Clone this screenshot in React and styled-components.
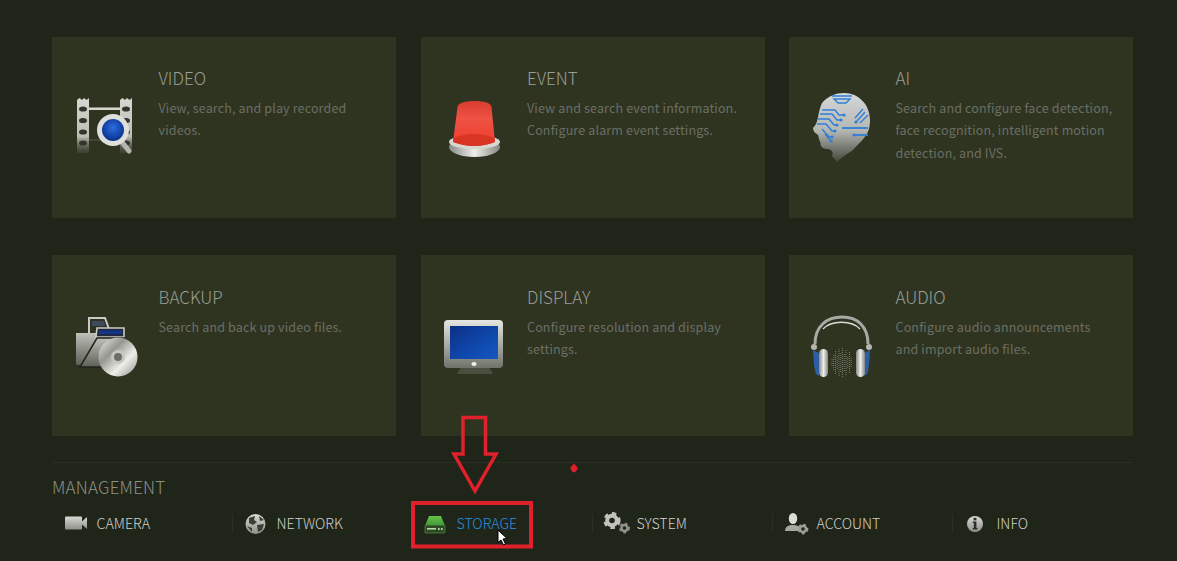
import React from "react";
import styled, { createGlobalStyle } from "styled-components";

const GlobalStyle = createGlobalStyle`
  html, body {
    margin: 0;
    padding: 0;
    background: #20251a;
    overflow: hidden;
  }
`;

const Page = styled.div`
  position: relative;
  width: 1177px;
  height: 561px;
  box-sizing: border-box;
  padding: 37px 44px 0 52px;
  background: #20251a;
  font-family: "Noto Sans CJK SC", "Noto Sans", sans-serif;
  overflow: hidden;
`;

const CardGrid = styled.div`
  display: grid;
  grid-template-columns: repeat(3, 344px);
  grid-auto-rows: 181px;
  column-gap: 24.5px;
  row-gap: 37px;
`;

const Card = styled.div`
  display: flex;
  background: #2f3421;
  padding-left: 16px;
`;

const IconSlot = styled.div`
  flex: none;
  width: 72px;
  height: 72px;
  margin-top: 55px;
  margin-right: 18px;
`;

const CardText = styled.div`
  padding-top: ${(p) => (p.$lower ? "29px" : "28px")};
  padding-left: 0.5px;
  padding-right: 4px;
  white-space: nowrap;
`;

const Title = styled.div`
  font-size: 17px;
  font-weight: 300;
  line-height: 26px;
  color: #9a9e95;
`;

const Description = styled.div`
  margin-top: 6px;
  font-size: 12.5px;
  line-height: 22.4px;
  color: #6b6f64;
  letter-spacing: 0.15px;
`;

const Footer = styled.div`
  margin-top: 26px;
  border-top: 1px solid #2a2f21;
`;

const FooterTitle = styled.div`
  margin-top: 12px;
  font-size: 17px;
  font-weight: 300;
  line-height: 24px;
  color: #8c9087;
  letter-spacing: 0.2px;
`;

const MenuRow = styled.div`
  display: grid;
  grid-template-columns: repeat(6, 180px);
  margin-top: 15px;
`;

const MenuItem = styled.div`
  display: flex;
  align-items: center;
  height: 18px;
  border-left: 1px solid ${(p) => (p.$first ? "transparent" : "#2b3023")};
`;

const MenuIcon = styled.div`
  flex: none;
  width: 32px;
  height: 24px;
  margin-left: 7px;
  margin-right: 4.5px;
`;

const MenuLabel = styled.span`
  font-size: 14.2px;
  font-weight: 300;
  color: ${(p) => (p.$active ? "#2a8fdc" : "#cfd1ca")};
`;

const Overlay = styled.svg`
  position: absolute;
  left: 0;
  top: 0;
  pointer-events: none;
`;

const Defs = () => (
  <svg width="0" height="0" style={{ position: "absolute" }}>
    <defs>
      <linearGradient id="menuGrey" x1="0" y1="0" x2="0" y2="1">
        <stop offset="0" stopColor="#d8d8d4" />
        <stop offset="1" stopColor="#8e908a" />
      </linearGradient>
      <linearGradient id="filmFade" x1="0" y1="0" x2="0" y2="1">
        <stop offset="0" stopColor="#d8d8d2" />
        <stop offset="0.7" stopColor="#bcbdb6" />
        <stop offset="1" stopColor="#5a5d50" stopOpacity="0.3" />
      </linearGradient>
      <radialGradient id="lens" cx="0.5" cy="0.4" r="0.6">
        <stop offset="0" stopColor="#2a6de0" />
        <stop offset="1" stopColor="#0b2f8c" />
      </radialGradient>
      <linearGradient id="dome" x1="0" y1="0" x2="0" y2="1">
        <stop offset="0" stopColor="#d93c2e" />
        <stop offset="0.4" stopColor="#ee5345" />
        <stop offset="1" stopColor="#f0392b" />
      </linearGradient>
      <linearGradient id="baseRing" x1="0" y1="0" x2="1" y2="0">
        <stop offset="0" stopColor="#888a84" />
        <stop offset="0.5" stopColor="#eeeeea" />
        <stop offset="1" stopColor="#85877f" />
      </linearGradient>
      <linearGradient id="head" x1="0" y1="0" x2="0" y2="1">
        <stop offset="0" stopColor="#d5d8d8" />
        <stop offset="0.55" stopColor="#b4b6b2" />
        <stop offset="1" stopColor="#42463a" />
      </linearGradient>
      <linearGradient id="folder" x1="0" y1="0" x2="0" y2="1">
        <stop offset="0" stopColor="#bfc0ba" />
        <stop offset="1" stopColor="#5d6056" />
      </linearGradient>
      <linearGradient id="disc" x1="0" y1="0" x2="1" y2="1">
        <stop offset="0" stopColor="#f0f0ec" />
        <stop offset="0.35" stopColor="#95968f" />
        <stop offset="0.65" stopColor="#efefea" />
        <stop offset="1" stopColor="#8d8e87" />
      </linearGradient>
      <linearGradient id="screen" x1="0" y1="0" x2="1" y2="1">
        <stop offset="0" stopColor="#0c2f86" />
        <stop offset="0.6" stopColor="#0f49ad" />
        <stop offset="1" stopColor="#1558c0" />
      </linearGradient>
      <linearGradient id="bezel" x1="0" y1="0" x2="0" y2="1">
        <stop offset="0" stopColor="#e6e6e2" />
        <stop offset="1" stopColor="#70736a" />
      </linearGradient>
      <linearGradient id="driveGreen" x1="0" y1="0" x2="0" y2="1">
        <stop offset="0" stopColor="#63c24a" />
        <stop offset="1" stopColor="#3f9a32" />
      </linearGradient>
    </defs>
  </svg>
);

const Art = ({ children }) => (
  <svg width="72" height="72" viewBox="0 0 72 72">
    {children}
  </svg>
);

const VideoIcon = () => (
  <Art>
    <path d="M21 15.5H52V18H21ZM21 47H40V49H21Z" fill="url(#filmFade)" />
    {[9, 52].map((x) => (
      <g key={x}>
        <path d={`M${x} 8l2.5 -2 2.5 2 2 -2 2.5 2 2.5-2V61H${x}Z`} fill="url(#filmFade)" />
        {[17, 28.5, 40, 51].map((y) => (
          <ellipse key={y} cx={x + 6} cy={y} rx="4" ry="2.6" fill="#33362a" />
        ))}
      </g>
    ))}
    <path d="M54 50L61 59" stroke="#b5b5ac" strokeWidth="5" strokeLinecap="round" />
    <circle cx="45" cy="38" r="16" fill="#dededa" />
    <circle cx="45" cy="38" r="11" fill="url(#lens)" />
  </Art>
);

const EventIcon = () => (
  <Art>
    <ellipse cx="37.5" cy="55" rx="25.5" ry="10" fill="url(#baseRing)" />
    <ellipse cx="37.5" cy="50" rx="25.5" ry="7" fill="#d8d8d2" />
    <path d="M20.5 15C21 11 28 9 37.5 9C47 9 54 11 54.5 15L58 50Q37.5 58 16 50Z" fill="url(#dome)" />
    <path d="M16.5 46Q37.5 38 57.5 46L58 50Q37.5 58 16 50Z" fill="#d93525" />
  </Art>
);

const AiIcon = () => (
  <Art>
    <path
      d="M17 11C23 4 31 1 39 1C54 1 65 13 65 28C65 36 63 41 59 46C55 51 51 54 48 58C42 62 36 66 32 70L27 64C29 60 26 57 22 57C18 57 15 54 15.5 51L14 47L13 43C10 41 8 39 8 36C11 33 12 30 13 25C14 20 15 15 17 11Z"
      fill="url(#head)"
    />
    <g fill="none" stroke="#2f7fd6" strokeWidth="1.4">
      <path d="M27 4H47M29 7H45L41 11H33Z" />
      <path d="M17 18H30L34 23H38M15 22H27L32 28H35M13 27H24L29 33H31M12 32H21L27 39H29M17 37L24 45H26M20 42L25 48" />
      <path d="M52 29L60 20M55 31L63 23M50 26L58 17" />
      <path d="M37 36H63" strokeWidth="1.8" />
      <path d="M50 43H63" strokeWidth="1.8" />
    </g>
    <g fill="#2f7fd6">
      <circle cx="39" cy="23" r="1.6" />
      <circle cx="36" cy="28" r="1.6" />
      <circle cx="32" cy="33" r="1.6" />
      <circle cx="30" cy="39" r="1.6" />
      <circle cx="27" cy="45" r="1.6" />
      <circle cx="26" cy="49" r="1.6" />
      <circle cx="51" cy="30" r="1.6" />
      <circle cx="49" cy="43" r="1.6" />
    </g>
  </Art>
);

const BackupIcon = () => (
  <Art>
    <path d="M21 24V8H37L41 19" fill="none" stroke="#c9cac3" strokeWidth="2" />
    <path d="M24 11H36L37 16H24Z" fill="#3c4a5c" />
    <path d="M8 23H30V55H9Q8 55 8 53Z" fill="url(#folder)" />
    <path d="M29 18H56V27H28Z" fill="#23283c" stroke="#c9cac3" strokeWidth="1.6" />
    <path d="M31 20.5H54V24H31Z" fill="#12368c" />
    <path d="M29 28H56V44L36 57H12Z" fill="url(#folder)" stroke="#20251a" strokeWidth="1.5" />
    <circle cx="50" cy="47" r="19.5" fill="url(#disc)" />
    <circle cx="50" cy="47" r="7" fill="#c6c7c0" />
    <circle cx="50" cy="47" r="4" fill="#6d6f67" />
  </Art>
);

const DisplayIcon = () => (
  <Art>
    <path d="M26 54H50L56 64H20Z" fill="#4a4e40" />
    <rect x="7" y="10" width="59" height="48" rx="4" fill="url(#bezel)" />
    <rect x="13" y="16" width="48" height="33" fill="url(#screen)" />
    <ellipse cx="37" cy="54" rx="2.6" ry="2" fill="#efefea" />
  </Art>
);

const AudioIcon = () => {
  const bars = [4, 8, 12, 7, 14, 10, 15, 9, 13, 6, 11, 5];
  return (
    <Art>
      <path d="M10 34C10 16 22 7 37 7C52 7 63 16 63 34" fill="none" stroke="#a8aaa4" strokeWidth="3" />
      <path d="M18 19C26 10 47 10 55 19" fill="none" stroke="#dcdcd6" strokeWidth="1.4" />
      <circle cx="9" cy="37" r="3" fill="#b5b6af" />
      <circle cx="64" cy="37" r="3" fill="#b5b6af" />
      <path d="M8 40L14 43V66L11 64Q9 60 8 40Z" fill="#2c5ea6" />
      <path d="M65 40L59 43V66L62 64Q64 60 65 40Z" fill="#2c5ea6" />
      <rect x="14" y="39" width="9" height="28" rx="4.5" fill="url(#baseRing)" />
      <rect x="51" y="39" width="9" height="28" rx="4.5" fill="url(#baseRing)" />
      {bars.map((h, i) => (
        <line
          key={i}
          x1={27 + i * 1.75}
          x2={27 + i * 1.75}
          y1={53 - h}
          y2={53 + h}
          stroke="#8a8d82"
          strokeWidth="0.8"
          strokeDasharray="1 1"
        />
      ))}
    </Art>
  );
};

const Gear = ({ cx, cy, r, fill = "#c2c3bd" }) => (
  <g>
    <circle cx={cx} cy={cy} r={r * 0.9} fill="none" stroke={fill} strokeWidth={r * 0.35} strokeDasharray={`${r * 0.55} ${r * 0.5}`} />
    <circle cx={cx} cy={cy} r={r * 0.6} fill="none" stroke={fill} strokeWidth={r * 0.5} />
  </g>
);

const CameraGlyph = () => (
  <svg width="32" height="24" viewBox="0 0 32 24">
    <rect x="5" y="5.5" width="17" height="13" rx="1" fill="url(#menuGrey)" />
    <path d="M22 10.5L27 6V18L22 13.5Z" fill="url(#menuGrey)" />
  </svg>
);

const NetworkGlyph = () => (
  <svg width="32" height="24" viewBox="0 0 32 24">
    <circle cx="15.5" cy="13" r="10" fill="url(#menuGrey)" />
    <g fill="#3a3e33">
      <path d="M9 7L15 5L14 9L17 11L13 14L9 12Z" />
      <path d="M19 5L24 9L20 10Z" />
      <path d="M17 14L24 13L22 19L18 21Z" />
      <path d="M7 15L12 17L12 21Z" />
    </g>
  </svg>
);

const StorageGlyph = () => (
  <svg width="32" height="24" viewBox="0 0 32 24">
    <path d="M9 5H21L25 15H5Z" fill="url(#driveGreen)" />
    <rect x="5" y="14" width="20" height="8" rx="1" fill="#2d4a25" stroke="#5f9e4a" strokeWidth="0.6" />
    <rect x="7" y="17" width="9" height="1.6" fill="#b7d7a8" />
    <rect x="18" y="17" width="1.6" height="2" fill="#b7d7a8" />
    <rect x="21" y="17" width="1.6" height="2" fill="#b7d7a8" />
  </svg>
);

const SystemGlyph = () => (
  <svg width="32" height="24" viewBox="0 0 32 24">
    <Gear cx={12} cy={9.5} r={8} />
    <Gear cx={24.5} cy={17} r={5} fill="#8f918a" />
  </svg>
);

const AccountGlyph = () => (
  <svg width="32" height="24" viewBox="0 0 32 24">
    <ellipse cx="13" cy="7.5" rx="4.2" ry="5.5" fill="#dcdcd8" />
    <path d="M5 20Q5 15 11 14H15Q20 15 20 18L18 20Z" fill="#a6a8a1" />
    <Gear cx={23} cy={18} r={5} fill="#9b9d96" />
  </svg>
);

const InfoGlyph = () => (
  <svg width="32" height="24" viewBox="0 0 32 24">
    <circle cx="15" cy="13" r="8" fill="url(#menuGrey)" />
    <rect x="13.6" y="6.8" width="2.8" height="2.6" fill="#2b2f25" />
    <path d="M12.8 10.5H16.4V17H17.4V18.6H12.8V17H13.8V12H12.8Z" fill="#2b2f25" />
  </svg>
);

const cards = [
  { title: "VIDEO", Icon: VideoIcon, text: ["View, search, and play recorded", "videos."] },
  { title: "EVENT", Icon: EventIcon, text: ["View and search event information.", "Configure alarm event settings."] },
  { title: "AI", Icon: AiIcon, text: ["Search and configure face detection,", "face recognition, intelligent motion", "detection, and IVS."] },
  { title: "BACKUP", Icon: BackupIcon, lower: true, text: ["Search and back up video files."] },
  { title: "DISPLAY", Icon: DisplayIcon, lower: true, text: ["Configure resolution and display", "settings."] },
  { title: "AUDIO", Icon: AudioIcon, lower: true, text: ["Configure audio announcements", "and import audio files."] },
];

const menu = [
  { label: "CAMERA", Icon: CameraGlyph },
  { label: "NETWORK", Icon: NetworkGlyph },
  { label: "STORAGE", Icon: StorageGlyph, active: true },
  { label: "SYSTEM", Icon: SystemGlyph },
  { label: "ACCOUNT", Icon: AccountGlyph },
  { label: "INFO", Icon: InfoGlyph },
];

const App = () => (
  <Page>
    <GlobalStyle />
    <Defs />
    <CardGrid>
      {cards.map(({ title, Icon, text, lower }) => (
        <Card key={title}>
          <IconSlot>
            <Icon />
          </IconSlot>
          <CardText $lower={lower}>
            <Title>{title}</Title>
            <Description>
              {text.map((line) => (
                <div key={line}>{line}</div>
              ))}
            </Description>
          </CardText>
        </Card>
      ))}
    </CardGrid>
    <Footer>
      <FooterTitle>MANAGEMENT</FooterTitle>
      <MenuRow>
        {menu.map(({ label, Icon, active }, i) => (
          <MenuItem key={label} $first={i === 0}>
            <MenuIcon>
              <Icon />
            </MenuIcon>
            <MenuLabel $active={active}>{label}</MenuLabel>
          </MenuItem>
        ))}
      </MenuRow>
    </Footer>
    {/* red markup drawn over the screenshot */}
    <Overlay width="1177" height="561" viewBox="0 0 1177 561">
      <path
        d="M463 417.5H485.5V454H496L475 491L454 454H463Z"
        fill="none"
        stroke="#e0202a"
        strokeWidth="3.5"
        strokeLinejoin="miter"
      />
      <rect x="413" y="503" width="118" height="43.5" fill="none" stroke="#e0202a" strokeWidth="4" />
      <path d="M574 463.5L577.5 467.5Q577.5 471 574 472.5Q570.5 471 570.5 467.5Z" fill="#e0202a" />
      <path d="M498 530V542.5L501 540L503.5 545L505.5 544L503 539L507 538.5Z" fill="#fff" stroke="#000" strokeWidth="1" />
    </Overlay>
  </Page>
);

export default App;
